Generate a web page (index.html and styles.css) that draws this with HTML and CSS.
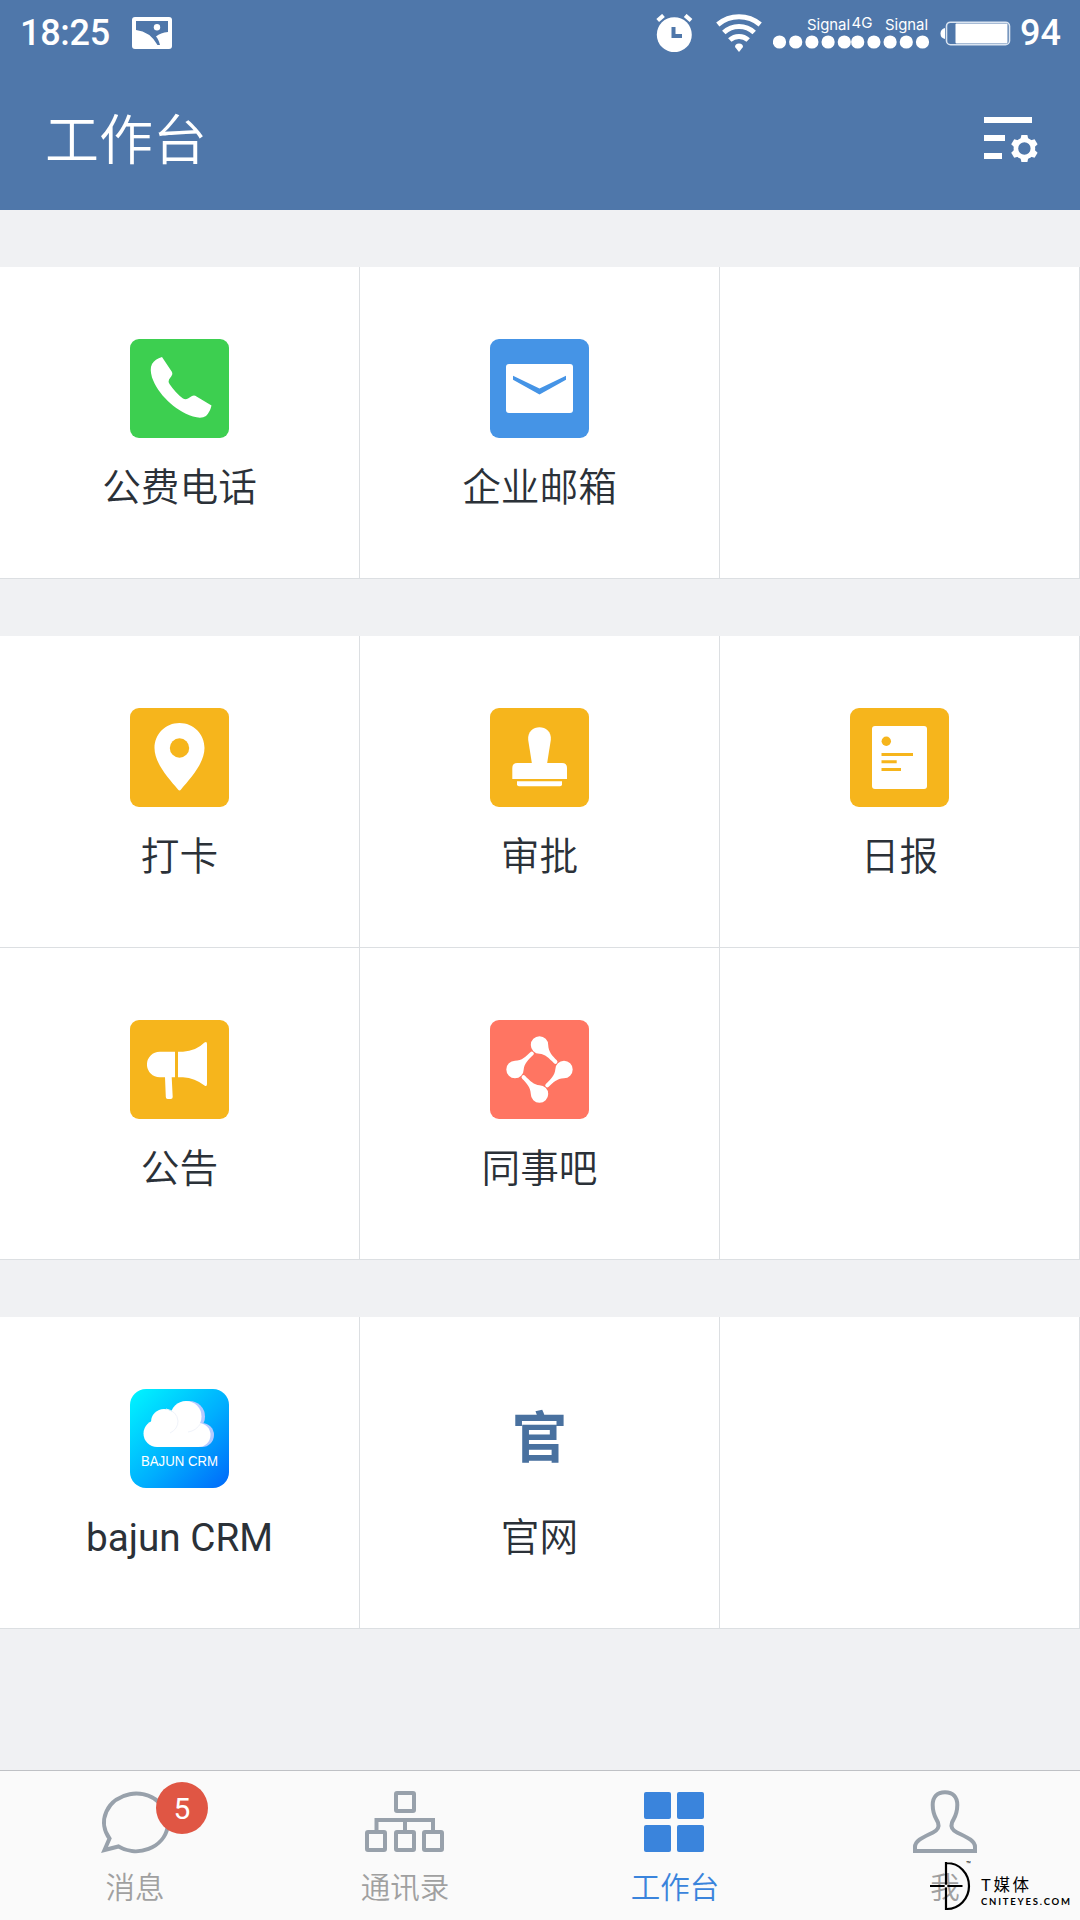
FILE: index.html
```html
<!DOCTYPE html>
<html lang="zh-CN">

<head>
    <meta charset="UTF-8" />
    <meta name="viewport" content="width=device-width, initial-scale=1.0" />
    <title>工作台</title>
    <link rel="stylesheet" href="styles.css">
</head>

<body>
    <header class="header">
        <div class="status-bar">
            <span class="status-text">18:25</span>
            <svg class="picture" width="40" height="32" viewBox="0 0 40 32">
                <rect width="40" height="32" rx="3" fill="#fff" />
                <path d="M4 4H36V15Q28.500 15.500 24 19.500Q26.500 22 28 28H25.500Q18 14.500 4 13Z" fill="#4f77aa" />
                <circle cx="25" cy="10.300" r="3.200" fill="#fff" />
            </svg>
            <svg class="alarm" width="37" height="38" viewBox="0 0 37 38">
                <circle cx="18.300" cy="20.700" r="17.500" fill="#fff" />
                <path d="M1.700 6.500L7.500 1.500M35 6.500L29.200 1.500" stroke="#fff" stroke-width="4.200" />
                <path d="M17.500 13V22H26" fill="none" stroke="#4f77aa" stroke-width="4" />
            </svg>
            <svg class="wifi" width="46" height="38" viewBox="0 0 46 38">
                <g fill="none" stroke="#fff" stroke-width="5">
                    <path d="M1.800 10.500A33 33 0 0 1 44.200 10.500" />
                    <path d="M7.800 18.500A22 22 0 0 1 38.200 18.500" />
                    <path d="M13.800 26A13.500 13.500 0 0 1 32.200 26" />
                </g>
                <path d="M19 33Q19 29.500 23 29.500Q27 29.500 27 33L23 38Z" fill="#fff" />
            </svg>
            <svg class="signal" width="157" height="40" viewBox="0 -2 157 40">
                <g class="signal-text" fill="#fff">
                    <text x="34" y="14.500" textLength="43" lengthAdjust="spacingAndGlyphs">Signal</text>
                    <text x="78.500" y="13" textLength="21" lengthAdjust="spacingAndGlyphs">4G</text>
                    <text x="112" y="14.500" textLength="43" lengthAdjust="spacingAndGlyphs">Signal</text>
                </g>
                <g fill="#fff">
                    <circle cx="6.500" cy="27" r="6.600" />
                    <circle cx="22.700" cy="27" r="6.600" />
                    <circle cx="38.900" cy="27" r="6.600" />
                    <circle cx="55.100" cy="27" r="6.600" />
                    <circle cx="71.300" cy="27" r="6.600" />
                    <circle cx="84.700" cy="27" r="6.600" />
                    <circle cx="100.900" cy="27" r="6.600" />
                    <circle cx="117.100" cy="27" r="6.600" />
                    <circle cx="133.300" cy="27" r="6.600" />
                    <circle cx="149.500" cy="27" r="6.600" />
                </g>
            </svg>
            <svg class="battery" width="71" height="25" viewBox="0 0 71 25">
                <path d="M5 7Q0.500 8 0.500 12.500Q0.500 17 5 18Z" fill="#fff" />
                <rect x="6.500" y="1.200" width="63" height="22.500" rx="4" fill="none" stroke="#dbe5f1" stroke-width="1.600" />
                <rect x="15.500" y="2.500" width="52" height="20" rx="1" fill="#fff" />
            </svg>
            <span class="status-text">94</span>
        </div>
        <div class="title-bar">
            <h1>工作台</h1>
            <svg width="54" height="46" viewBox="0 0 54 46">
                <path d="M0 0H48V6H0ZM0 18H21V24H0ZM0 36H18V42H0Z" fill="#fff" />
                <g transform="translate(40.400 31.500)">
                    <circle r="8.500" fill="none" stroke="#fff" stroke-width="4.600" />
                    <path id="tooth" d="M-4 -9L-3 -13.500H3L4 -9Z" fill="#fff" />
                    <use href="#tooth" transform="rotate(60)" />
                    <use href="#tooth" transform="rotate(120)" />
                    <use href="#tooth" transform="rotate(180)" />
                    <use href="#tooth" transform="rotate(240)" />
                    <use href="#tooth" transform="rotate(300)" />
                </g>
            </svg>
        </div>
    </header>

    <main>
        <div class="grid">
            <div class="cell">
                <svg class="icon green" viewBox="0 0 99 99">
                    <path d="M32 18L42 33Q43 35 41.500 37L39 40.500Q38 42.500 39.500 45Q46 54.500 53 59.500Q55.500 61 58 59.500L62 57Q64.500 56 66.500 57.500L81.500 66.500Q80 73 76 77Q71.500 80 63 77.500C44 71 28 55 22 38.500Q19.500 30 22 25Q25 20 32 18Z" />
                </svg>
                <span>公费电话</span>
            </div>
            <div class="cell">
                <svg class="icon blue" viewBox="0 0 99 99">
                    <rect x="16" y="25" width="67" height="49" rx="3" />
                    <path class="cut" d="M23 36.700L49.500 49.500L76 36.700V40.700L49.500 55.500L23 40.700Z" />
                </svg>
                <span>企业邮箱</span>
            </div>
            <div class="cell"></div>
        </div>

        <div class="grid">
            <div class="cell">
                <svg class="icon yellow" viewBox="0 0 99 99">
                    <path d="M49.500 15C63.500 15 74.500 26 74.500 40C74.500 55 61 69.500 51 81.500Q49.500 83.500 48 81.500C38 69.500 24.500 55 24.500 40C24.500 26 35.500 15 49.500 15Z" />
                    <circle class="cut" cx="49.500" cy="40" r="9.700" />
                </svg>
                <span>打卡</span>
            </div>
            <div class="cell">
                <svg class="icon yellow" viewBox="0 0 99 99">
                    <path d="M42 56L38.200 32C36.500 15 62.500 15 60.800 32L57 56Z" />
                    <path d="M22.300 71V60Q22.300 55 27.300 55H72Q77 55 77 60V71Z" />
                    <path d="M27 73.300H72V76.300Q72 78.300 70 78.300H29Q27 78.300 27 76.300Z" />
                </svg>
                <span>审批</span>
            </div>
            <div class="cell">
                <svg class="icon yellow" viewBox="0 0 99 99">
                    <rect x="22" y="18" width="55" height="63" rx="3" />
                    <circle class="cut" cx="36.300" cy="33.300" r="4.700" />
                    <path class="cut" d="M31.500 45H63V48H31.500ZM31.500 52.300H46.700V55.300H31.500ZM31.500 60H51V63H31.500Z" />
                </svg>
                <span>日报</span>
            </div>
            <div class="cell">
                <svg class="icon yellow" viewBox="0 0 99 99">
                    <path d="M45 31.700V57.200H41.700L42.700 77Q42.700 79 40.700 79H37.700Q35.900 79 35.800 77L35 57.200H29.700A12.700 12.700 0 0 1 29.700 31.700Z" />
                    <path d="M48 31.700H53Q66 31 74.500 22.500Q77 21 77 24V64Q77 67 74.500 65.500Q65 58 53 57.200H48Z" />
                </svg>
                <span>公告</span>
            </div>
            <div class="cell">
                <svg class="icon red" viewBox="0 0 99 99">
                    <path id="drop" d="M49.500 16.300A8.700 8.700 0 0 1 58.200 25C58.500 32 62.500 36 66.800 40.300A2 2 0 0 1 64 43.200C59 38 55 34.200 49.500 33.700A8.700 8.700 0 0 1 49.500 16.300Z" />
                    <use href="#drop" transform="rotate(90 49.500 49.500)" />
                    <use href="#drop" transform="rotate(180 49.500 49.500)" />
                    <use href="#drop" transform="rotate(270 49.500 49.500)" />
                </svg>
                <span>同事吧</span>
            </div>
            <div class="cell"></div>
        </div>

        <div class="grid">
            <div class="cell">
                <svg class="icon crm" viewBox="0 0 99 99">
                    <g class="shade">
                        <circle cx="59.500" cy="27.500" r="15.500" />
                        <circle cx="72" cy="46" r="12" />
                    </g>
                    <circle cx="27" cy="44.500" r="13.500" />
                    <circle cx="34" cy="33" r="13" />
                    <circle cx="56" cy="27.500" r="15.500" />
                    <circle cx="68.500" cy="46" r="12" />
                    <rect x="27" y="30" width="41.500" height="28" />
                    <path class="fold" d="M36 20Q47 22 48 32Q48 40 40 44M71 34Q66 42 58 43" />
                    <text x="11" y="77" textLength="77" lengthAdjust="spacingAndGlyphs">BAJUN CRM</text>
                </svg>
                <span class="latin">bajun CRM</span>
            </div>
            <div class="cell">
                <div class="icon word">官</div>
                <span>官网</span>
            </div>
            <div class="cell"></div>
        </div>
    </main>

    <nav class="tabs">
        <div class="tab">
            <svg class="line" viewBox="0 0 80 66">
                <path d="M14.500 49.500A32 28.800 0 1 1 23.500 57.500L9.500 61Z" />
            </svg>
            <span>消息</span>
            <b class="badge">5</b>
        </div>
        <div class="tab">
            <svg class="line" viewBox="0 0 80 66">
                <rect x="31" y="4" width="18" height="18" rx="1" />
                <rect x="2" y="43" width="18" height="18" rx="1" />
                <rect x="31" y="43" width="18" height="18" rx="1" />
                <rect x="59" y="43" width="18" height="18" rx="1" />
                <path d="M11.500 42V31H68V42M40 31V42" />
            </svg>
            <span>通讯录</span>
        </div>
        <div class="tab active">
            <svg viewBox="0 0 80 66" fill="#3a84dc">
                <rect x="9" y="3" width="27" height="27" rx="2" />
                <rect x="42" y="3" width="27" height="27" rx="2" />
                <rect x="9" y="36" width="27" height="27" rx="2" />
                <rect x="42" y="36" width="27" height="27" rx="2" />
            </svg>
            <span>工作台</span>
        </div>
        <div class="tab">
            <svg class="line" viewBox="0 0 80 66">
                <path d="M10 62V58C10 51 20 47.500 28 43.500C33 41 34.500 38 33 33.500C31 29 27.700 26 27.700 16C27.700 8 32 3.200 40 3.200C48 3.200 52.300 8 52.300 16C52.300 26 49 29 47 33.500C45.500 38 47 41 52 43.500C60 47.500 70 51 70 58V62Z" />
            </svg>
            <span>我</span>
        </div>
    </nav>

    <div class="watermark">
        <svg width="48" height="50" viewBox="0 0 48 50">
            <path d="M18 1V49M18 2H19A22 23 0 0 1 19 48H18M2 25H34.500" fill="none" stroke="#000" stroke-width="2.200" />
            <circle cx="18" cy="25" r="1.500" fill="#fff" />
            <text x="38" y="6" font-size="8">™</text>
        </svg>
        <div class="watermark-text">
            <p class="name">T媒体</p>
            <p class="site">CNITEYES.COM</p>
        </div>
    </div>
</body>

</html>
```
FILE: styles.css
```css
body {
    display: flex;
    flex-direction: column;
    position: relative;
    height: 1920px;
    margin: 0;
    overflow: hidden;
    background-color: #f0f1f3;
    font-family: Roboto, "Noto Sans CJK SC", sans-serif;
}

.header {
    height: 210px;
    background-color: #4f77aa;
    color: #fff;
}

.status-bar {
    display: flex;
    align-items: center;
    height: 66px;
    padding: 0 19px 0 20px;
}

.status-text {
    font-size: 36px;
    font-weight: 500;
}

.status-text:first-child {
    letter-spacing: -0.3px;
}

.picture {
    margin-left: 22px;
}

.alarm {
    margin-left: auto;
}

.wifi {
    margin-left: 23px;
}

.signal {
    margin: 0 10px 0 11px;
}

.signal-text {
    font-family: Inter, sans-serif;
    font-size: 15px;
}

.battery {
    margin-right: 9px;
}

.title-bar {
    display: flex;
    justify-content: space-between;
    padding: 33px 42px 0 45px;
}

.title-bar h1 {
    margin: 3px 0 0;
    font-size: 54px;
    font-weight: 350;
    line-height: 80px;
}

.title-bar svg {
    margin-top: 18px;
}

main {
    flex: 1;
}

.grid {
    display: grid;
    grid-template-columns: repeat(3, 1fr);
    margin-top: 57px;
    background-color: #fff;
}

.cell {
    display: flex;
    flex-direction: column;
    align-items: center;
    box-sizing: border-box;
    height: 312px;
    padding-top: 72px;
    border-right: 1px solid #dcdfe2;
    border-bottom: 1px solid #dcdfe2;
    color: #2b3138;
    font-size: 38.7px;
    font-weight: 350;
}

.cell span {
    margin-top: 21px;
    line-height: 58px;
}

.cell .latin {
    font-weight: 400;
}

.icon {
    width: 99px;
    height: 99px;
    border-radius: 9px;
    fill: #fff;
}

.green {
    background-color: #3dcf50;
}

.blue {
    background-color: #4594e6;
}

.yellow {
    background-color: #f6b51c;
}

.red {
    background-color: #ff7562;
}

.blue .cut {
    fill: #4594e6;
}

.yellow .cut {
    fill: #f6b51c;
}

.crm {
    border-radius: 16px;
    background: linear-gradient(135deg, #00f0ff 5%, #00aefe 55%, #0068fa 100%);
    font-family: "Liberation Sans", sans-serif;
    font-size: 14px;
    font-weight: 400;
}

.crm .shade {
    fill: #b5caff;
}

.crm .fold {
    fill: none;
    stroke: #f0f3fa;
}

.word {
    color: #49719f;
    font-size: 55px;
    font-weight: 700;
    line-height: 99px;
    text-align: center;
}

.tabs {
    display: flex;
    box-sizing: border-box;
    height: 150px;
    border-top: 1px solid #bfc1c5;
    background-color: #fafafa;
}

.tab {
    display: flex;
    flex: 1;
    flex-direction: column;
    align-items: center;
    position: relative;
    padding-top: 18px;
    color: #a0a0a0;
    font-size: 29.5px;
    font-weight: 350;
}

.tab svg {
    width: 80px;
    height: 66px;
}

.tab span {
    margin-top: 13px;
    line-height: 40px;
}

.line {
    fill: none;
    stroke: #98a1ab;
    stroke-width: 4;
}

.active {
    color: #3a84dc;
}

.badge {
    position: absolute;
    top: 11px;
    left: 156px;
    width: 52px;
    height: 52px;
    border-radius: 50%;
    background-color: #e05644;
    color: #fff;
    font-size: 30px;
    font-weight: 400;
    line-height: 53px;
    text-align: center;
}

.watermark {
    display: flex;
    position: absolute;
    left: 928px;
    top: 1861px;
    color: #000;
}

.watermark-text {
    margin: 14px 0 0 5px;
}

.watermark p {
    margin: 0;
    white-space: nowrap;
}

.name {
    font-size: 16.5px;
    letter-spacing: 2.6px;
    line-height: 22px;
}

.site {
    font-family: Lato, sans-serif;
    font-size: 9.5px;
    font-weight: 700;
    letter-spacing: 1.8px;
    line-height: 10px;
}
```
